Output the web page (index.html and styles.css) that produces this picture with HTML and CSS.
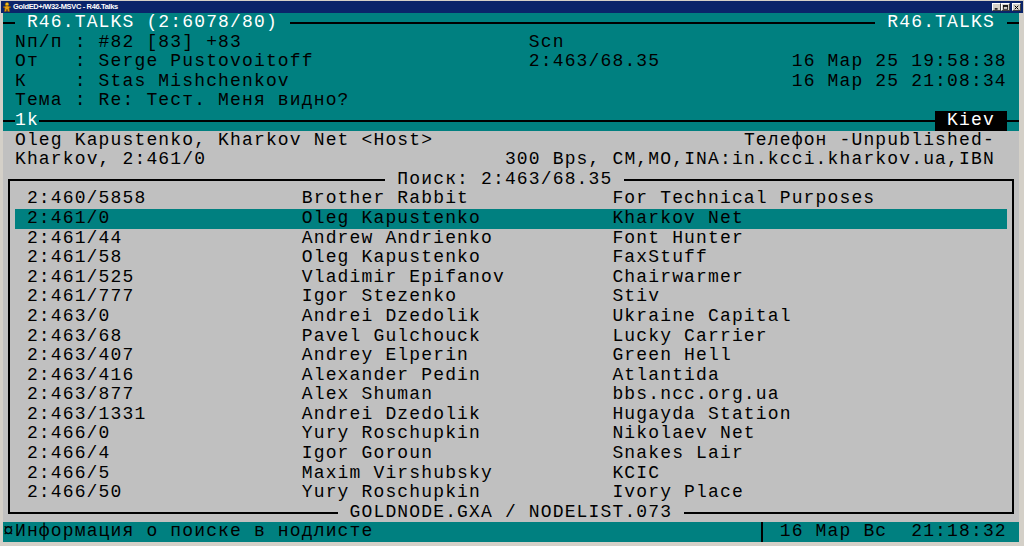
FILE: index.html
```html
<!DOCTYPE html>
<html lang="ru">
<head>
<meta charset="utf-8">
<title>GoldED+/W32-MSVC - R46.Talks</title>
<link rel="stylesheet" href="styles.css">
</head>
<body>
<div class="window">
  <div class="titlebar">
    <svg class="app-icon" width="10" height="10" viewBox="0 0 10 10" aria-hidden="true">
      <circle cx="5" cy="2.2" r="1.8" fill="#f0c020" stroke="#8a5a00" stroke-width="0.6"/>
      <path d="M1 5 L5 3.8 L9 5 L7 6 L7.5 9.5 L5.8 9.5 L5 7 L4.2 9.5 L2.5 9.5 L3 6 Z" fill="#e8a010" stroke="#8a5a00" stroke-width="0.6"/>
    </svg>
    <span class="title-text">GoldED+/W32-MSVC - R46.Talks</span>
    <div class="title-buttons">
      <span class="tbtn"><svg width="7" height="6" viewBox="0 0 7 6"><rect x="1" y="4" width="4" height="2" fill="#000"/></svg></span>
      <span class="tbtn"><svg width="7" height="6" viewBox="0 0 7 6"><rect x="0.5" y="0.5" width="6" height="5" fill="none" stroke="#000"/><rect x="0" y="0" width="7" height="2" fill="#000"/></svg></span>
      <span class="tbtn close"><svg width="7" height="6" viewBox="0 0 7 6"><path d="M1 0.5 L6 5.5 M6 0.5 L1 5.5" stroke="#000" stroke-width="1.4"/></svg></span>
    </div>
  </div>

  <div class="console">
    <section class="header">
      <div class="row">
        <span class="ln one"></span><span class="white"> R46.TALKS (2:6078/80) </span><span class="ln grow"></span><span class="white"> R46.TALKS </span><span class="ln one"></span>
      </div>
      <div class="row fields">
        <span class="f-left">Nп/п : #82 [83] +83</span><span class="f-mid">Scn</span><span class="f-right"></span>
      </div>
      <div class="row fields">
        <span class="f-left">От   : Serge Pustovoitoff</span><span class="f-mid">2:463/68.35</span><span class="f-right">16 Мар 25 19:58:38</span>
      </div>
      <div class="row fields">
        <span class="f-left">К    : Stas Mishchenkov</span><span class="f-mid"></span><span class="f-right">16 Мар 25 21:08:34</span>
      </div>
      <div class="row fields">
        <span class="f-left">Тема : Re: Тест. Меня видно?</span><span class="f-mid"></span><span class="f-right"></span>
      </div>
      <div class="row">
        <span class="ln one"></span><span class="white">1k</span><span class="ln grow"></span><span class="kiev"> Kiev </span><span class="ln one"></span>
      </div>
    </section>

    <section class="info">
      <div class="row"><span>Oleg Kapustenko, Kharkov Net &lt;Host&gt;</span><span>Телефон -Unpublished-</span></div>
      <div class="row"><span>Kharkov, 2:461/0</span><span>300 Bps, CM,MO,INA:in.kcci.kharkov.ua,IBN</span></div>

      <div class="box-top">
        <span class="corner-tl"></span><span class="box-title"> Поиск: 2:463/68.35 </span><span class="corner-tr"></span>
      </div>
      <div class="list">
        <div class="item"><span class="addr">2:460/5858</span><span>Brother Rabbit</span><span>For Technical Purposes</span></div>
        <div class="item sel"><span class="addr">2:461/0</span><span>Oleg Kapustenko</span><span>Kharkov Net</span></div>
        <div class="item"><span class="addr">2:461/44</span><span>Andrew Andrienko</span><span>Font Hunter</span></div>
        <div class="item"><span class="addr">2:461/58</span><span>Oleg Kapustenko</span><span>FaxStuff</span></div>
        <div class="item"><span class="addr">2:461/525</span><span>Vladimir Epifanov</span><span>Chairwarmer</span></div>
        <div class="item"><span class="addr">2:461/777</span><span>Igor Stezenko</span><span>Stiv</span></div>
        <div class="item"><span class="addr">2:463/0</span><span>Andrei Dzedolik</span><span>Ukraine Capital</span></div>
        <div class="item"><span class="addr">2:463/68</span><span>Pavel Gulchouck</span><span>Lucky Carrier</span></div>
        <div class="item"><span class="addr">2:463/407</span><span>Andrey Elperin</span><span>Green Hell</span></div>
        <div class="item"><span class="addr">2:463/416</span><span>Alexander Pedin</span><span>Atlantida</span></div>
        <div class="item"><span class="addr">2:463/877</span><span>Alex Shuman</span><span>bbs.ncc.org.ua</span></div>
        <div class="item"><span class="addr">2:463/1331</span><span>Andrei Dzedolik</span><span>Hugayda Station</span></div>
        <div class="item"><span class="addr">2:466/0</span><span>Yury Roschupkin</span><span>Nikolaev Net</span></div>
        <div class="item"><span class="addr">2:466/4</span><span>Igor Goroun</span><span>Snakes Lair</span></div>
        <div class="item"><span class="addr">2:466/5</span><span>Maxim Virshubsky</span><span>KCIC</span></div>
        <div class="item"><span class="addr">2:466/50</span><span>Yury Roschupkin</span><span>Ivory Place</span></div>
      </div>
      <div class="box-bottom">
        <span class="corner-bl"></span><span class="box-title"> GOLDNODE.GXA / NODELIST.073 </span><span class="corner-br"></span>
      </div>
    </section>

    <footer class="status">
      <span class="status-msg">¤Информация о поиске в нодлисте</span>
      <span class="status-clock"> 16 Мар Вс  21:18:32</span>
    </footer>
  </div>
</div>
</body>
</html>
```

FILE: styles.css
```css
:root {
  --cw: 11.95px;
  --rh: 19.6px;
  --teal: #008080;
  --gray: #c0c0c0;
}

* {
  box-sizing: border-box;
  margin: 0;
  padding: 0;
}

html, body {
  width: 1024px;
  height: 546px;
  overflow: hidden;
}

body {
  background: #d4d0c8;
  font-family: "Liberation Mono", "DejaVu Sans Mono", monospace;
}

.window {
  display: flex;
  flex-direction: column;
  height: 546px;
  padding-top: 1px;
}

/* ---------- title bar ---------- */
.titlebar {
  height: 12px;
  margin: 0 1px;
  background: #0a246a;
  display: flex;
  align-items: center;
  gap: 1px;
  padding-left: 1px;
}

.app-icon {
  flex: none;
}

.title-text {
  font-family: "Liberation Sans", "DejaVu Sans", sans-serif;
  font-weight: bold;
  font-size: 7.5px;
  letter-spacing: -0.35px;
  color: #fff;
  line-height: 12px;
  white-space: pre;
}

.title-buttons {
  margin-left: auto;
  display: flex;
  align-items: center;
  padding-right: 2px;
}

.tbtn {
  width: 9px;
  height: 8px;
  background: #d4d0c8;
  border-top: 1px solid #fff;
  border-left: 1px solid #fff;
  border-right: 1px solid #404040;
  border-bottom: 1px solid #404040;
  display: flex;
  align-items: center;
  justify-content: center;
}

.tbtn svg {
  width: 5px;
  height: 5px;
}

.tbtn.close {
  margin-left: 2px;
}

/* ---------- console ---------- */
.console {
  margin-left: 3px;
  width: calc(var(--cw) * 85);
  font-size: 18px;
  letter-spacing: 1.148px;
  line-height: var(--rh);
  color: #000;
}

.row {
  height: var(--rh);
  display: flex;
  align-items: center;
  white-space: pre;
}

.ln {
  height: 2px;
  background: #000;
}

.ln.one {
  width: var(--cw);
  flex: none;
}

.ln.grow {
  flex: 1;
}

.white {
  color: #fff;
}

.header {
  background: var(--teal);
}

.fields .f-left {
  width: calc(var(--cw) * 44);
  padding-left: var(--cw);
}

.fields .f-mid {
  width: calc(var(--cw) * 22);
}

.fields .f-right {
  width: calc(var(--cw) * 18);
}

.kiev {
  background: #000;
  color: #fff;
  align-self: stretch;
}

/* ---------- info + search box ---------- */
.info {
  background: var(--gray);
}

.info .row {
  justify-content: space-between;
  padding: 0 calc(var(--cw) * 2) 0 var(--cw);
}

.box-top,
.box-bottom {
  height: var(--rh);
  display: flex;
  white-space: pre;
  padding: 0 calc(var(--cw) / 2 - 1px);
}

.box-title {
  line-height: var(--rh);
}

.corner-tl,
.corner-tr {
  margin-top: calc(var(--rh) / 2 - 1px);
  border-top: 2px solid #000;
}

.corner-tl {
  width: calc(var(--cw) * 31.5 + 1px);
  border-left: 2px solid #000;
}

.corner-tr {
  flex: 1;
  border-right: 2px solid #000;
}

.corner-bl,
.corner-br {
  height: calc(var(--rh) / 2 + 1px);
  border-bottom: 2px solid #000;
}

.corner-bl {
  width: calc(var(--cw) * 27.5 + 1px);
  border-left: 2px solid #000;
}

.corner-br {
  flex: 1;
  border-right: 2px solid #000;
}

.list {
  margin: 0 calc(var(--cw) / 2 - 1px);
  border-left: 2px solid #000;
  border-right: 2px solid #000;
  padding: 0 calc(var(--cw) / 2 - 1px);
}

.item {
  height: var(--rh);
  display: grid;
  grid-template-columns: calc(var(--cw) * 24) calc(var(--cw) * 26) 1fr;
  white-space: pre;
}

.item .addr {
  padding-left: var(--cw);
}

.item.sel {
  background: var(--teal);
}

/* ---------- status line ---------- */
.status {
  height: var(--rh);
  display: flex;
  background: var(--teal);
  white-space: pre;
}

.status-msg {
  flex: 1;
}

.status-clock {
  width: calc(var(--cw) * 21.5 + 1px);
  border-left: 2px solid #000;
  padding-left: calc(var(--cw) / 2 - 1px);
}
```
